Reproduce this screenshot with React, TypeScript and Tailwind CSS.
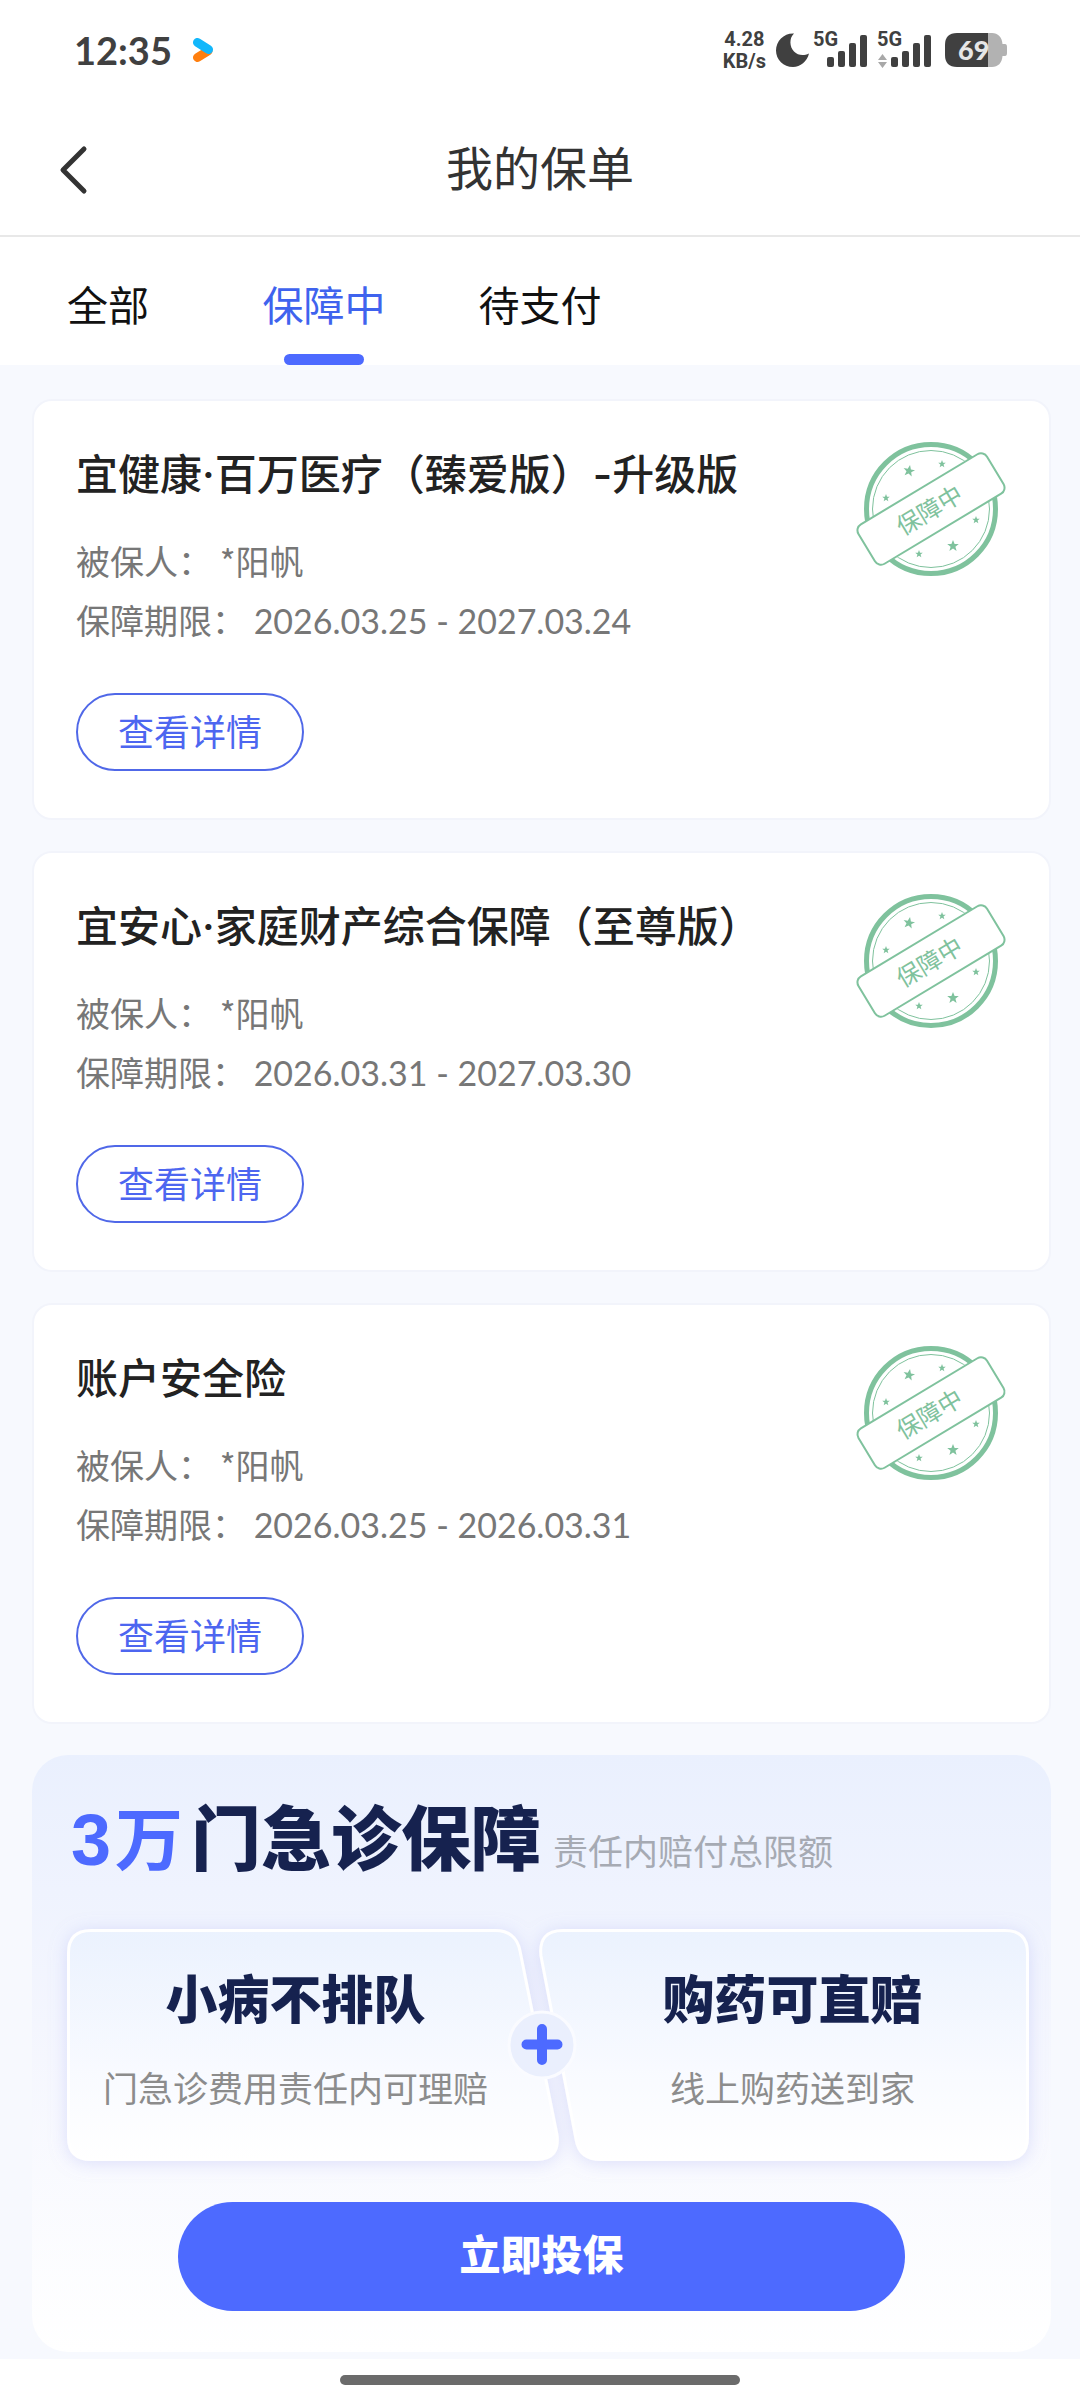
import { useState } from "react";

const policies = [
  { title: "宜健康·百万医疗（臻爱版）-升级版", insured: "*阳帆", period: "2026.03.25 - 2027.03.24" },
  { title: "宜安心·家庭财产综合保障（至尊版）", insured: "*阳帆", period: "2026.03.31 - 2027.03.30" },
  { title: "账户安全险", insured: "*阳帆", period: "2026.03.25 - 2026.03.31" },
];

const tabs = ["全部", "保障中", "待支付"];

const STAR = "M0-6 1.6-1.9 5.8-1.9 2.4.8 3.6 5 0 2.5-3.6 5-2.4.8-5.8-1.9-1.6-1.9Z";

function Signal({ arrows = false }: { arrows?: boolean }) {
  return (
    <svg className="h-10 w-14 shrink-0 overflow-visible" viewBox="0 -4 56 40" fill="#404040">
      <text x="0" y="12" fontSize="20" fontWeight="700" fontFamily="Roboto, sans-serif">5G</text>
      <rect x="14" y="23" width="7" height="10" rx="2" />
      <rect x="25" y="17" width="7" height="16" rx="2" />
      <rect x="36" y="9" width="7" height="24" rx="2" />
      <rect x="47" y="1" width="7" height="32" rx="2" />
      {arrows && <path d="M5.500 20 10 26H1ZM5.500 34 10 28H1Z" fill="#a8a8a8" />}
    </svg>
  );
}

function StatusBar() {
  return (
    <div className="flex h-[100px] items-center justify-between pl-[74px] pr-[73px] text-[#404040]">
      <div className="flex items-center gap-5">
        <span className="font-[Lato] text-[38px] leading-none font-bold">12:35</span>
        <svg className="h-[26px] w-[22px]" viewBox="0 0 22 26" fill="none" strokeLinecap="round" strokeWidth="9">
          <path d="M5.500 20.500 16 14" stroke="#ff7f0e" />
          <path d="M5.500 5.500 16.500 12.500" stroke="#12b7fb" />
        </svg>
      </div>
      <div className="flex items-center">
        <div className="mr-2.5 text-center font-[Roboto] text-[20px] leading-[22px] font-bold">
          <div>4.28</div>
          <div>KB/s</div>
        </div>
        <svg className="mr-1 h-[34px] w-[33px]" viewBox="0 0 33 34" fill="#404040">
          <path d="M18 0.500C13 5 13.500 14 18 18.500C22 22.500 27.500 23 33 20.500C31 28.500 24.500 34 17 34C7.500 34 0 26.500 0 17.500C0 8 8 0 18 .5Z" />
        </svg>
        <div className="flex gap-2">
          <Signal />
          <Signal arrows />
        </div>
        <svg className="ml-3 h-[34px] w-[62px]" viewBox="0 0 62 34">
          <path d="M43 0H47C53 0 57 4 57.500 11H60Q62 11 62 14V20Q62 23 60 23H57.500C57 30 53 34 47 34H43Z" fill="#b2b2b2" />
          <path d="M43 0H12Q0 0 0 12V22Q0 34 12 34H43Z" fill="#404040" />
          <text x="13" y="27" fontSize="27" fontWeight="900" fontFamily="Lato, sans-serif" fill="#e6e6e6">69</text>
        </svg>
      </div>
    </div>
  );
}

function Stamp() {
  return (
    <svg className="h-[136px] w-[152px] shrink-0" viewBox="16 22 152 136" fill="none" stroke="#7fc29d">
      <circle cx="92" cy="90" r="64.500" strokeWidth="5" />
      <circle cx="92" cy="90" r="58.500" strokeWidth="1" />
      <g fill="#7fc29d" stroke="none">
        <path d={STAR} transform="translate(70 52) rotate(10)" />
        <path d={STAR} transform="translate(103 45) scale(.65)" />
        <path d={STAR} transform="translate(47 79) scale(.65)" />
        <path d={STAR} transform="translate(137 101) scale(.65)" />
        <path d={STAR} transform="translate(114 127)" />
        <path d={STAR} transform="translate(80 135) scale(.65)" />
      </g>
      <g transform="rotate(-31 92 90)">
        <rect x="17" y="67" width="150" height="46" rx="7" fill="#fff" strokeWidth="2" />
        <text x="90" y="99" textAnchor="middle" fontSize="24" fill="#7fc29d" stroke="none">保障中</text>
      </g>
    </svg>
  );
}

function PolicyCard({ title, insured, period }: (typeof policies)[number]) {
  return (
    <article className="relative rounded-[20px] border-2 border-[#f2f4fb] bg-white px-[42px] pt-[44px] pb-[47px]">
      <h2 className="font-[Inter,'Noto_Sans_CJK_SC',sans-serif] text-[42px] leading-[60px] font-medium text-[#222]">{title}</h2>
      <div className="mt-[26px] text-[34px] leading-[59px] text-[#777]">
        <p>被保人： {insured}</p>
        <p>
          保障期限： <span className="font-[Lato]">{period}</span>
        </p>
      </div>
      <button className="mt-[43px] block h-[78px] rounded-full border-2 border-[#5068e8] px-10 pb-1 text-[36px] leading-none text-[#4d66f0]">
        查看详情
      </button>
      <div className="absolute top-10 right-[42px]">
        <Stamp />
      </div>
    </article>
  );
}

function Promo() {
  return (
    <section className="rounded-[36px] bg-linear-to-b from-[#eaf0fe] via-[#f4f6fe] via-45% to-white pt-[36px] pb-[41px]">
      <div className="flex items-baseline pl-[39px]">
        <span className="font-['Liberation_Sans'] text-[72px] leading-[88px] font-bold text-[#4d6aff]">3</span>
        <span className="ml-1 text-[68px] leading-[88px] font-bold text-[#4d6aff]">万</span>
        <h2 className="ml-2 text-[70px] leading-[88px] font-black text-[#16224f]">门急诊保障</h2>
        <span className="ml-3 text-[35px] text-[#a6aab3]">责任内赔付总限额</span>
      </div>

      <div className="relative mt-[45px] mr-[22px] ml-[35px] grid h-[232px] grid-cols-2 text-center">
        <svg className="absolute inset-0 h-full w-full overflow-visible" viewBox="0 0 962 232" preserveAspectRatio="none">
          <defs>
            <linearGradient id="pane" x1="0" y1="0" x2="0" y2="1">
              <stop offset="0" stopColor="#ebf2fe" />
              <stop offset=".6" stopColor="#f8faff" />
              <stop offset="1" stopColor="#fff" />
            </linearGradient>
            <filter id="glow" x="-10%" y="-15%" width="120%" height="130%">
              <feDropShadow dx="0" dy="2" stdDeviation="9" floodColor="#8f93ee" floodOpacity=".28" />
            </filter>
          </defs>
          <g fill="url(#pane)" stroke="#fff" strokeWidth="3" filter="url(#glow)">
            <path d="M24 1.500H428Q449 1.500 453 22L490 206Q493 230.500 470 230.500H24Q1.500 230.500 1.500 208V24Q1.500 1.500 24 1.500Z" />
            <path d="M496 1.500H938Q960.500 1.500 960.500 24V208Q960.500 230.500 938 230.500H534Q512 230.500 509 210L474 27Q471 1.500 496 1.500Z" />
          </g>
        </svg>
        <div className="relative pt-8 pr-6">
          <h3 className="text-[52px] leading-[72px] font-black text-[#16224f]">小病不排队</h3>
          <p className="mt-7 text-[35px] leading-[52px] text-[#8c8c8c]">门急诊费用责任内可理赔</p>
        </div>
        <div className="relative pt-8 pl-2">
          <h3 className="text-[52px] leading-[72px] font-black text-[#16224f]">购药可直赔</h3>
          <p className="mt-7 text-[35px] leading-[52px] text-[#8c8c8c]">线上购药送到家</p>
        </div>
        <svg className="absolute top-1/2 left-1/2 h-[70px] w-[70px] -translate-x-[41px] -translate-y-1/2" viewBox="0 0 70 70">
          <circle cx="35" cy="35" r="33" fill="#eaeffd" stroke="#fafbff" strokeWidth="3" />
          <path d="M35 19V50M19.500 34.500H50.500" stroke="#4d6aff" strokeWidth="10" strokeLinecap="round" />
        </svg>
      </div>

      <button className="mx-auto mt-[41px] block h-[109px] w-5/7 rounded-full bg-[#4d6aff] pb-2 text-[41px] leading-none font-black text-white">
        立即投保
      </button>
    </section>
  );
}

export default function App() {
  const [active, setActive] = useState(1);

  return (
    <div className="flex min-h-screen flex-col bg-white font-['Noto_Sans_CJK_SC',sans-serif]">
      <StatusBar />
      <header className="relative flex h-[137px] items-center justify-center border-b-2 border-[#e8e8e8]">
        <button aria-label="返回" className="absolute left-[57px] pt-1">
          <svg className="h-[50px] w-8" viewBox="0 0 32 50" fill="none" stroke="#333" strokeWidth="5" strokeLinecap="round" strokeLinejoin="round">
            <path d="M27 4 6 25 27 46" />
          </svg>
        </button>
        <h1 className="pb-1 text-[47px] leading-none text-[#333]">我的保单</h1>
      </header>
      <nav className="flex h-32">
        {tabs.map((tab, i) => (
          <button
            key={tab}
            onClick={() => setActive(i)}
            className={`flex w-1/5 flex-col items-center justify-between pt-[34px] text-[41px] leading-[64px] ${i === active ? "text-[#3f63ee]" : "text-[#111]"}`}
          >
            {tab}
            {i === active && <span className="h-[11px] w-20 rounded-full bg-[#4d6aff]" />}
          </button>
        ))}
      </nav>
      <main className="flex flex-col gap-[31px] bg-[#f7f9fe] pt-[34px] pr-[29px] pb-[7px] pl-8">
        {policies.map((p) => (
          <PolicyCard key={p.title} {...p} />
        ))}
        <Promo />
      </main>
      <footer className="flex grow items-center justify-center">
        <div className="h-2.5 w-[400px] rounded-full bg-[#6b6b6b]" />
      </footer>
    </div>
  );
}
